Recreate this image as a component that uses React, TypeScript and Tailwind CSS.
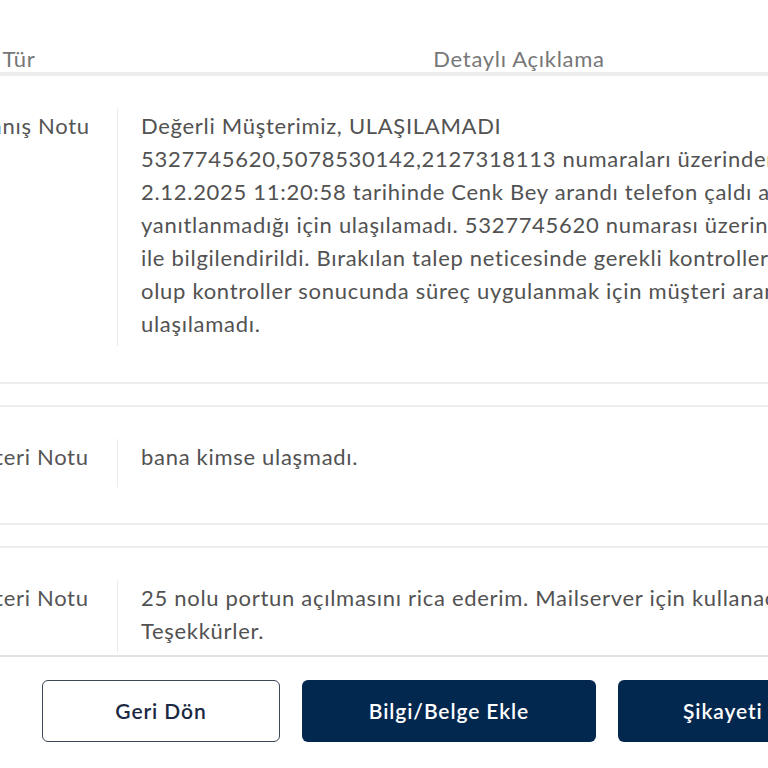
import React from 'react';

interface NoteRow {
  type: string;
  lines: string[];
}

const ROWS: NoteRow[] = [
  {
    type: 'Kapanış Notu',
    lines: [
      'Değerli Müşterimiz, ULAŞILAMADI',
      '5327745620,5078530142,2127318113 numaraları üzerinden',
      '2.12.2025 11:20:58 tarihinde Cenk Bey arandı telefon çaldı ancak',
      'yanıtlanmadığı için ulaşılamadı. 5327745620 numarası üzerinden SMS',
      'ile bilgilendirildi. Bırakılan talep neticesinde gerekli kontroller sağlanmış',
      'olup kontroller sonucunda süreç uygulanmak için müşteri aranmış ancak',
      'ulaşılamadı.',
    ],
  },
  {
    type: 'Müşteri Notu',
    lines: ['bana kimse ulaşmadı.'],
  },
  {
    type: 'Müşteri Notu',
    lines: ['25 nolu portun açılmasını rica ederim. Mailserver için kullanacağım.', 'Teşekkürler.'],
  },
];

const font = "font-['Lato','Noto_Sans',sans-serif]";

const Row: React.FC<{ row: NoteRow }> = ({ row }) => (
  <div className="flex border-y-2 border-[#ededed] pt-[32px] pb-[36px] mb-[21px] first:border-t-0">
    <div className="w-[198px] shrink-0 border-r border-[#ececec] pl-[31px] min-h-[48px] py-[1px] leading-[33px] text-[#555]">
      {row.type}
    </div>
    <div className="flex-1 pl-[23px] pt-[1px] pb-[6px] leading-[33px] text-[#525252]">
      {row.lines.map((l, i) => (
        <div key={i} className="whitespace-nowrap">
          {l}
        </div>
      ))}
    </div>
  </div>
);

export default function App() {
  return (
    <div className={`w-[768px] h-[768px] overflow-hidden bg-white ${font} text-[22px] tracking-[0.7px]`}>
      <div className="h-[657px] overflow-hidden border-b-2 border-[#e2e2e2]">
        <div className="-ml-[80px] w-[1000px]">
          <div className="flex pt-[45px] border-b-2 border-[#ededed] text-[#777] leading-[27px]">
            <div className="w-[198px] shrink-0 text-center">Tür</div>
            <div className="w-[802px] shrink-0 text-center">Detaylı Açıklama</div>
          </div>
          {ROWS.map((r, i) => (
            <Row key={i} row={r} />
          ))}
        </div>
      </div>
      <div className="flex gap-[22px] pl-[42px] pt-[23px]">
        <button className="w-[238px] h-[62px] shrink-0 rounded-[6px] border-[1.5px] border-[#3d4756] bg-white text-[21px] font-semibold tracking-[0.9px] text-[#1b2a42]">
          Geri Dön
        </button>
        <button className="w-[294px] h-[62px] shrink-0 rounded-[6px] bg-[#03284f] text-[21px] font-semibold tracking-[0.9px] text-white">
          Bilgi/Belge Ekle
        </button>
        <button className="h-[62px] shrink-0 rounded-[6px] bg-[#03284f] px-[65px] text-[21px] font-semibold tracking-[0.9px] text-white whitespace-nowrap">
          Şikayeti Kapat
        </button>
      </div>
    </div>
  );
}
